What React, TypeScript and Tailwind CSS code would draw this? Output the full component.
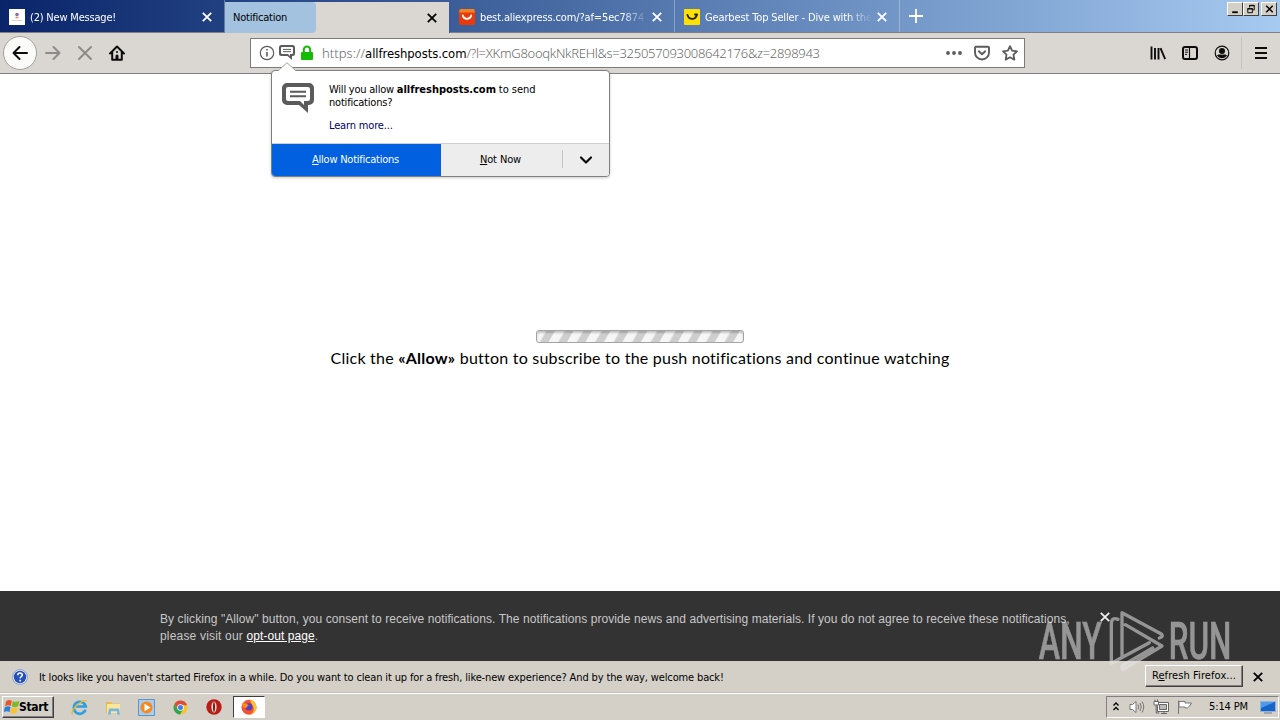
import type { ReactNode } from 'react';

const CloseIcon = ({ className = '' }: { className?: string }) => (
  <svg className={className} width="10" height="10" viewBox="0 0 10 10" fill="none" stroke="currentColor" strokeWidth="1.8">
    <path d="M.8.8l8.4 8.4M9.2.8L.8 9.2" />
  </svg>
);

const ChatIcon = ({ size, className = '' }: { size: number; className?: string }) => (
  <svg className={className} width={size} height={size} viewBox="0 0 32 32">
    <path
      fill="#5b5b5b"
      fillRule="evenodd"
      d="M5 0h22a5 5 0 0 1 5 5v12a5 5 0 0 1-5 5h-1v8l-9-8H5a5 5 0 0 1-5-5V5a5 5 0 0 1 5-5zm1 4a2 2 0 0 0-2 2v10a2 2 0 0 0 2 2h12l4 4v-4h4a2 2 0 0 0 2-2V6a2 2 0 0 0-2-2z"
    />
    <path d="M8 8.800h16M8 13.300h16" stroke="#5b5b5b" strokeWidth="2" />
  </svg>
);

const MessageFavicon = () => (
  <svg width="16" height="16" viewBox="0 0 16 16">
    <path fill="#fff" d="M0 0h16v16H0z" />
    <circle cx="8" cy="5.500" r="1.800" fill="#8a6fa8" />
    <path d="M6.500 8.500h3" stroke="#e8896a" strokeWidth="1.500" />
    <path d="M3 11.500h10" stroke="#ddd8c0" />
  </svg>
);

const AliFavicon = () => (
  <svg width="16" height="16" viewBox="0 0 16 16">
    <rect width="16" height="16" rx="2" fill="#e93a0c" />
    <path d="M1 0h14l1 3.500H0z" fill="#f58220" />
    <path d="M3.800 6.500c1 4.500 7.400 4.500 8.400 0" fill="none" stroke="#fff" strokeWidth="1.800" strokeLinecap="round" />
  </svg>
);

const GearbestFavicon = () => (
  <svg width="16" height="16" viewBox="0 0 16 16">
    <rect width="16" height="16" rx="1" fill="#ffe000" />
    <path d="M3.500 6c1.500 5 8 5.500 9.500-.5M11 5.500h2.200" fill="none" stroke="#222" strokeWidth="1.900" strokeLinecap="round" />
  </svg>
);

const Tab = ({ icon, children }: { icon: ReactNode; children: ReactNode }) => (
  <div className="flex w-[225px] items-center border-r border-white/30 pt-0.5 pr-[12px] pl-[9px] text-white">
    {icon}
    <div className="ml-[5px] h-4 w-[166px] overflow-hidden leading-[17px] whitespace-nowrap [mask-image:linear-gradient(to_right,#000_142px,transparent_168px)]">
      {children}
    </div>
    <CloseIcon className="ml-auto" />
  </div>
);

const WindowButton = ({ children }: { children: ReactNode }) => (
  <div className="h-[14px] w-4 border border-t-white border-r-[#404040] border-b-[#404040] border-l-white bg-[#d4d0c8]">
    <svg width="14" height="12" viewBox="0 0 14 13">
      {children}
    </svg>
  </div>
);

const TabBar = () => (
  <div className="flex h-[33px] shrink-0 border-b border-[#808080] bg-linear-to-r from-[#0a246a] to-[#a6caf0]">
    <Tab icon={<MessageFavicon />}>
      <span className="tracking-[-0.2px]">(2) New Message!</span>
    </Tab>
    <div className="mt-0.5 flex h-[31px] w-[225px] items-center border-r border-[#3a5a9c] bg-[#dad7d2] pr-[12px] text-black">
      <div className="flex h-full w-[91px] items-center rounded-r-sm bg-[#a3c2e0] pt-px pl-2 tracking-[-0.23px]">Notification</div>
      <CloseIcon className="ml-auto" />
    </div>
    <Tab icon={<AliFavicon />}>
      <span className="tracking-[-0.13px]">best.aliexpress.com/?af=5ec7874</span>
    </Tab>
    <Tab icon={<GearbestFavicon />}>
      <span className="tracking-[-0.14px]">Gearbest Top Seller - Dive with the</span>
    </Tab>
    <svg className="mt-[9px] ml-[9px]" width="14" height="14" viewBox="0 0 14 14">
      <path d="M7 0v14M0 7h14" stroke="#fff" strokeWidth="1.800" />
    </svg>
    <div className="mt-0.5 mr-[3px] ml-auto flex h-[14px]">
      <WindowButton>
        <path d="M4 10h6" stroke="#000" strokeWidth="2" />
      </WindowButton>
      <WindowButton>
        <path d="M5.500 5V2.500h5v5H9M5 3h6M3.500 6h5v4.500h-5zM3 6.500h6" fill="none" stroke="#000" />
      </WindowButton>
      <div className="w-0.5" />
      <WindowButton>
        <path d="M4 3l7 7M11 3l-7 7" stroke="#000" strokeWidth="1.600" />
      </WindowButton>
    </div>
  </div>
);

const NavBar = () => (
  <div className="flex h-[41px] shrink-0 items-center border-b border-[#808080] bg-[#dad7d2]">
    <div className="ml-[3px] flex size-[34px] items-center justify-center rounded-full border border-[#a3a19d] bg-[#fbfbfa]">
      <svg width="16" height="16" viewBox="0 0 16 16" fill="none" stroke="#0c0c0d" strokeWidth="2" strokeLinecap="round" strokeLinejoin="round">
        <path d="M15 8H1.500M7.500 2l-6 6 6 6" />
      </svg>
    </div>
    <svg className="ml-2" width="16" height="16" viewBox="0 0 16 16" fill="none" stroke="#8d8b88" strokeWidth="2" strokeLinecap="round" strokeLinejoin="round">
      <path d="M1 8h13.500M8.500 2l6 6-6 6" />
    </svg>
    <svg className="ml-4" width="16" height="16" viewBox="0 0 16 16" stroke="#8d8b88" strokeWidth="2" strokeLinecap="round">
      <path d="M2 2l12 12M14 2L2 14" />
    </svg>
    <svg className="ml-4" width="16" height="16" viewBox="0 0 16 16">
      <path d="M1 8.500L8 1.500l7 7M3.200 7v7.800h9.600V7" fill="none" stroke="#0c0c0d" strokeWidth="2" strokeLinecap="round" strokeLinejoin="round" />
      <path d="M6.500 15v-4a1.500 1.500 0 0 1 3 0v4z" fill="#0c0c0d" />
      <circle cx="8" cy="7" r="1" fill="#0c0c0d" />
    </svg>

    <div className="ml-[125px] flex h-[30px] w-[775px] items-center border border-[#7c7b79] bg-white pl-2">
      <svg width="16" height="16" viewBox="0 0 16 16" fill="none" stroke="#5b5b5b">
        <circle cx="8" cy="8" r="6.700" strokeWidth="1.200" />
        <path d="M8 7v4.500M8 4v1.600" strokeWidth="1.600" />
      </svg>
      <ChatIcon size={16} className="ml-1" />
      <svg className="ml-1" width="16" height="16" viewBox="0 0 16 16">
        <rect x="2" y="7" width="12" height="8" rx="1" fill="#12bc00" />
        <path d="M4.800 8V4.800a3.200 3.200 0 0 1 6.400 0V8" fill="none" stroke="#12bc00" strokeWidth="2" />
      </svg>
      <div className="ml-[7px] font-['Noto_Sans',sans-serif] text-[13px] leading-4 font-light whitespace-nowrap text-[#6a6a6a]">
        <span className="tracking-[0.05px]">https://</span>
        <span className="font-['DejaVu_Sans_Condensed',sans-serif] font-normal tracking-[-0.1px] text-black">allfreshposts.com</span>
        <span className="tracking-[-0.29px]">/?l=XKmG8ooqkNkREHl&amp;s=325057093008642176&amp;z=2898943</span>
      </div>
      <svg className="ml-auto" width="16" height="16" viewBox="0 0 16 16" fill="#5b5b5b">
        <circle cx="2" cy="8" r="1.900" />
        <circle cx="8" cy="8" r="1.900" />
        <circle cx="14" cy="8" r="1.900" />
      </svg>
      <svg className="ml-3" width="16" height="16" viewBox="0 0 16 16" fill="none" stroke="#5b5b5b" strokeWidth="1.900" strokeLinecap="round" strokeLinejoin="round">
        <path d="M2 1.800h12a1 1 0 0 1 1 1v4.700a7 7 0 0 1-14 0V2.800a1 1 0 0 1 1-1z" />
        <path d="M4.800 6.300L8 9.300l3.200-3" />
      </svg>
      <svg className="mr-[6px] ml-3" width="16" height="16" viewBox="0 0 16 16" fill="none" stroke="#5b5b5b" strokeWidth="1.800" strokeLinejoin="round">
        <path d="M8 1.200l2.100 4.400 4.900.7-3.500 3.400.8 4.900L8 12.300l-4.300 2.300.8-4.900L1 6.300l4.900-.7z" />
      </svg>
    </div>

    <svg className="ml-[125px]" width="16" height="16" viewBox="0 0 16 16" stroke="#0c0c0d" strokeWidth="1.900">
      <path d="M1.500 1.500v13M5 3v11.500M8.500 3v11.500M10.500 3.200l4.700 11" />
    </svg>
    <svg className="ml-4" width="16" height="16" viewBox="0 0 16 16" fill="none" stroke="#0c0c0d">
      <rect x="1" y="2" width="14" height="12" rx="2" strokeWidth="2" />
      <path d="M7.500 2v12" strokeWidth="1.200" />
      <path d="M3 5h3M3 7.200h3M3 9.400h2" />
    </svg>
    <svg className="ml-4" width="16" height="16" viewBox="0 0 16 16">
      <circle cx="8" cy="8" r="6.800" fill="none" stroke="#0c0c0d" strokeWidth="1.200" />
      <circle cx="8" cy="6" r="3" fill="#0c0c0d" />
      <path d="M3 10.500c1.500-1.500 3-.8 5-.8s3.500-.7 5 .8a6 6 0 0 1-10 0z" fill="#0c0c0d" />
    </svg>
    <div className="ml-[11px] h-8 w-px bg-[#c6c3be]" />
    <svg className="ml-[11px]" width="16" height="16" viewBox="0 0 16 16" stroke="#0c0c0d" strokeWidth="2">
      <path d="M2 3h12M2 8h12M2 13h12" />
    </svg>
  </div>
);

const PermissionPopup = () => (
  <div className="absolute top-[70px] left-[271px] w-[339px] rounded-[4px] border border-[#808080] bg-white text-black shadow-[0_1px_3px_rgba(0,0,0,0.2)]">
    <svg className="absolute -top-[9px] left-[5px]" width="20" height="10" viewBox="0 0 20 10">
      <path d="M0 10L10 0.500 20 10z" fill="#fff" />
      <path d="M1 9L10 .7 19 9" fill="none" stroke="#a3a3a3" />
    </svg>
    <div className="flex h-[72px]">
      <ChatIcon size={32} className="mt-3 ml-[10px]" />
      <div className="mt-3 ml-[15px] leading-[13px]">
        <p className="tracking-[-0.22px]">
          Will you allow <b className="tracking-[-0.02px]">allfreshposts.com</b> <span className="tracking-[-0.05px]">to send</span>
        </p>
        <p className="tracking-[-0.2px]">notifications?</p>
        <p className="mt-[10px] tracking-[-0.16px] text-[#000066]">Learn more...</p>
      </div>
    </div>
    <div className="flex h-[33px] items-center overflow-hidden rounded-b-[3px] border-t border-[#cfcfcf] bg-[#ededed]">
      <button className="h-full w-[169px] pt-px pr-0.5 tracking-[-0.24px] bg-[#0060df] text-white">
        <u>A</u>llow Notifications
      </button>
      <button className="h-full w-[121px] pt-px pr-0.5 tracking-[-0.12px]">
        <u>N</u>ot Now
      </button>
      <div className="mb-0.5 h-[18px] w-px bg-[#c4c4c4]" />
      <svg className="ml-4" width="14" height="10" viewBox="0 0 14 10" fill="none" stroke="#0c0c0d" strokeWidth="2.200" strokeLinecap="round" strokeLinejoin="round">
        <path d="M2 2.500l5 5 5-5" />
      </svg>
    </div>
  </div>
);

const Page = () => (
  <main className="flex min-h-0 flex-1 flex-col items-center bg-white pt-[256px] text-black">
    <div className="h-[13px] w-[208px] rounded-[3px] border border-[#a3a3a3] bg-[repeating-linear-gradient(120deg,#f6f6f6_0px,#f6f6f6_7px,#cecece_9px,#cecece_15px,#f6f6f6_16px)] shadow-[inset_0_2px_2px_rgba(0,0,0,0.2)]" />
    <p className="mt-[5px] font-['Lato',sans-serif] text-[16px] leading-5 tracking-[0.23px] whitespace-nowrap">
      Click the <b>«Allow»</b> button to subscribe to the push notifications and continue watching
    </p>
  </main>
);

const ConsentBar = () => (
  <div className="flex h-[70px] shrink-0 bg-[#333] pt-5 pl-[160px] font-['Liberation_Sans',sans-serif] text-[12px] leading-[17px] text-[#c8c8c8]">
    <p className="w-[930px] tracking-[0.074px]">
      By clicking "Allow" button, you consent to receive notifications. The notifications provide news and advertising materials. If you do not
      agree to receive these notifications,
      <br />
      <span className="tracking-[0.18px]">please visit our </span>
      <u className="text-white">opt-out page</u>.
    </p>
    <CloseIcon className="mt-px ml-[10px] text-[#eee]" />
  </div>
);

const RefreshBar = () => (
  <div className="flex h-8 shrink-0 items-center border-b border-[#c4c0b8] bg-[#d4d0c8] pl-3 text-black">
    <svg width="16" height="16" viewBox="0 0 16 16">
      <circle cx="8" cy="8" r="7.500" fill="#e4ebf7" stroke="#8ea3cc" />
      <circle cx="8" cy="8" r="6.200" fill="#2450b8" />
      <path d="M5.800 6.200c0-3 4.600-2.800 4.500-.2 0 1.500-2.200 1.600-2.200 3.300M8.100 10.800v1.600" fill="none" stroke="#fff" strokeWidth="1.600" />
    </svg>
    <p className="ml-[11px] pt-[3px] tracking-[-0.14px] whitespace-nowrap">
      It looks like you haven't started Firefox in a while. Do you want to clean it up for a fresh, like-new experience? And by the way, welcome back!
    </p>
    <button className="mr-[10px] mb-px ml-auto h-[22px] w-[98px] border border-t-white border-r-[#404040] border-b-[#404040] border-l-white pt-px tracking-[0.09px] shadow-[inset_-1px_-1px_0_#808080]">
      R<u>e</u>fresh Firefox...
    </button>
    <CloseIcon className="mr-[17px]" />
  </div>
);

const Taskbar = () => (
  <div className="flex h-[27px] shrink-0 items-center border-t border-white bg-[#d4d0c8] pl-0.5 text-black">
    <div className="flex h-[22px] w-[52px] items-center border border-t-white border-r-[#404040] border-b-[#404040] border-l-white pl-px shadow-[inset_-1px_-1px_0_#808080]">
      <svg width="16" height="16" viewBox="0 0 16 16">
        <path d="M2 2.500Q5 0 7.800 1.800L6.800 7Q4 5.300 1 7.300z" fill="#e8562a" />
        <path d="M8.800 2Q12 3.800 15.500 1.800L14 7.300Q11 9 7.800 7.300z" fill="#7db928" />
        <path d="M.8 8.300Q4 6.500 6.600 8L5.500 13.200Q3 11.500-.3 13.200z" fill="#2f7fd6" />
        <path d="M7.500 8.300Q10.500 10.200 13.700 8.300L12.500 13.800Q9.500 15.500 6.300 13.800z" fill="#fbc22c" />
      </svg>
      <b className="-ml-px text-[12px] tracking-[-0.3px]">Start</b>
    </div>

    <svg className="ml-[17px]" width="17" height="17" viewBox="0 0 17 17" fill="none">
      <path d="M14.500 10.800a6 6 0 1 1 .2-3.300H5" stroke="#2e9fe0" strokeWidth="2.700" />
      <path d="M1.500 15.500C-1 11 11 0 16 1.800" stroke="#edb92e" strokeWidth="1.300" />
    </svg>
    <svg className="ml-[17px]" width="17" height="17" viewBox="0 0 17 17">
      <path d="M1 3h5l1 1.500h8V14H1z" fill="#e7b94f" />
      <path d="M2 5h13v9H2z" fill="#fbe79a" />
      <path d="M4 9.500h10l1 6h-3v-3.200H6v3.200H3z" fill="#75b7e4" />
    </svg>
    <svg className="ml-4" width="17" height="17" viewBox="0 0 17 17">
      <path d="M.5.5h16v16H.5z" fill="#a9cdee" stroke="#5d94c9" />
      <circle cx="8.500" cy="8.500" r="6" fill="#f48a1d" />
      <path d="M6.500 4.800l6 3.700-6 3.700z" fill="#fff" />
    </svg>
    <svg className="ml-[18px]" width="15" height="15" viewBox="0 0 16 16">
      <circle cx="8" cy="8" r="7.500" fill="#f7c52b" />
      <path d="M1.500 4.300A7.500 7.500 0 0 1 15 5.500H8L5 9.500z" fill="#dd4b3e" />
      <path d="M1.500 4.300a7.500 7.500 0 0 0 6 11.200L10.500 10 5 9.500z" fill="#2ea455" />
      <circle cx="8" cy="8" r="3.500" fill="#fff" />
      <circle cx="8" cy="8" r="2.700" fill="#3f80e8" />
    </svg>
    <svg className="ml-[18px]" width="16" height="16" viewBox="0 0 16 16">
      <circle cx="8" cy="8" r="7.700" fill="#b81d18" />
      <ellipse cx="8" cy="8" rx="2.600" ry="5.600" fill="#e8dcd8" />
      <ellipse cx="8" cy="8" rx="1" ry="5" fill="#8e1511" />
    </svg>
    <div className="ml-[11px] flex h-[22px] w-8 items-center justify-center border border-t-[#404040] border-r-white border-b-white border-l-[#404040] bg-white">
      <svg width="16" height="16" viewBox="0 0 16 16">
        <circle cx="8" cy="8.300" r="7.500" fill="#f6522e" />
        <path d="M9 .5c4 1.500 6.800 4.500 6.500 8.500A7.500 7.500 0 0 1 8 15.800c4-1 5.500-4 4.500-7.500-.5-2-3-4-3.500-7.800z" fill="#fdc52f" />
        <circle cx="7.800" cy="7.800" r="3.600" fill="#5240c4" />
        <path d="M1 4.500C4 3.500 6 5 8.500 6.500c-2.500 0-2 2-4 2.500-1.500 0-3-1-3.500-4.500z" fill="#fb8f1d" />
      </svg>
    </div>

    <div className="mr-px ml-auto flex h-[22px] w-[173px] items-center border border-t-[#808080] border-r-white border-b-white border-l-[#808080] pl-[6px]">
      <svg width="6" height="10" viewBox="0 0 6 10" fill="none" stroke="#000" strokeWidth="1.300">
        <path d="M.5 3.500L3 1 5.500 3.500M.5 8L3 5.500 5.500 8" />
      </svg>
      <svg className="ml-[10px]" width="16" height="16" viewBox="0 0 16 16" fill="none" stroke="#777">
        <path d="M1 5.500h2.500L7 2.500v11l-3.500-3H1z" fill="#fff" />
        <path d="M9 5.500q1.500 2.500 0 5M11 4q2.500 4 0 8M13 2.500q3.500 5.500 0 11" />
      </svg>
      <svg className="ml-2" width="16" height="16" viewBox="0 0 16 16" fill="none" stroke="#666">
        <path d="M4.500 3.500h11v9h-11z" fill="#fff" />
        <path d="M6.500 5.500h7v5h-7z" fill="#bbb" />
        <path d="M1 2.500h4.500V6H1z" fill="#fff" />
        <path d="M2 .5v2M4.500 .5v2M3.200 6v8h3M8 14.500h6M11 12.500v2" />
      </svg>
      <svg className="ml-2" width="16" height="16" viewBox="0 0 16 16" fill="#fff" stroke="#777">
        <path d="M1.500 15V1.500M2 2.500h6v1.500h6.500l-2 3-2 2H8V8H2z" />
      </svg>
      <span className="ml-4 pt-px tracking-[-0.12px] whitespace-nowrap">5:14 PM</span>
      <svg className="mr-0.5 ml-auto" width="16" height="16" viewBox="0 0 16 16">
        <path d="M.5 2.500h15v10H.5z" fill="#1763c6" stroke="#8fb3dc" />
        <path d="M1 3h14L1 9z" fill="#4f9bea" />
        <path d="M4 14h8" stroke="#6c7b8b" />
      </svg>
    </div>
  </div>
);

const Watermark = () => (
  <svg className="pointer-events-none absolute top-[605px] left-[1035px]" width="200" height="75" viewBox="105 45 600 225" opacity=".55">
    <g fill="#e6e6e6" stroke="#e6e6e6" strokeWidth="1.500" fontFamily="Roboto, sans-serif" fontSize="156" fontWeight="500">
      <text x="116" y="208" textLength="190" lengthAdjust="spacingAndGlyphs">
        ANY
      </text>
      <text x="506" y="208" textLength="188" lengthAdjust="spacingAndGlyphs">
        RUN
      </text>
    </g>
    {/* play mark between the two words */}
    <path
      d="M354 88q-20-8-20 14v118l114-62M366 202V68l118 64q8 8-6 12M376 104l110 64-116 70q-8-3-2-12l90-52"
      fill="none"
      stroke="#e6e6e6"
      strokeWidth="10"
      strokeLinecap="round"
      strokeLinejoin="round"
    />
  </svg>
);

export default function App() {
  return (
    <div className="relative flex h-[720px] w-[1280px] flex-col overflow-hidden font-['DejaVu_Sans_Condensed',sans-serif] text-[11px]">
      <TabBar />
      <NavBar />
      <Page />
      <ConsentBar />
      <RefreshBar />
      <Taskbar />
      <PermissionPopup />
      <Watermark />
    </div>
  );
}
